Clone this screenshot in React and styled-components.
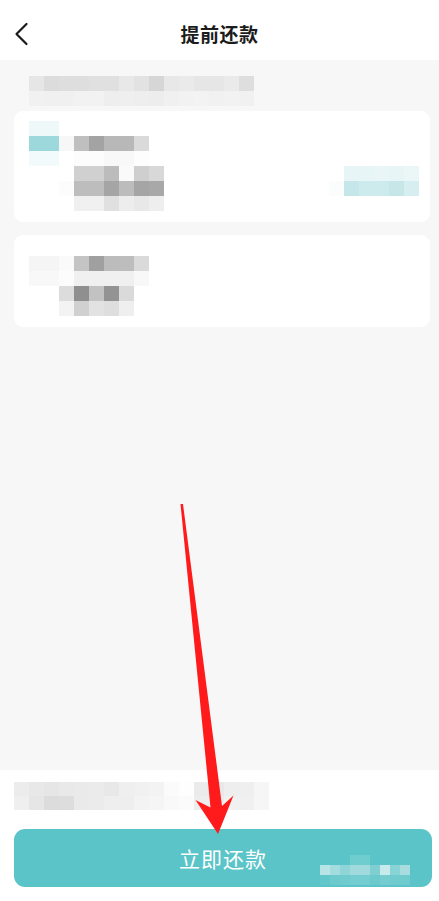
import React from "react";
import styled, { createGlobalStyle } from "styled-components";

const GlobalStyle = createGlobalStyle`
  html, body {
    margin: 0;
    padding: 0;
    background: #ffffff;
  }
  body {
    font-family: "Noto Sans CJK SC", "Noto Sans", sans-serif;
  }
  * {
    box-sizing: border-box;
  }
`;

const W = "#ffffff";
const T = "#5bc4c8";

// blurred blocks, one colour per cell
const topStrip = [
  ["#e6e6e6", "#dcdcdc", "#dedede", "#dedede", "#e0e0e0", "#e0e0e0", "#e8e8e8", "#e2e2e2", "#d6d6d6", "#e8e8e8", "#eaeaea", "#e6e6e6", "#e6e6e6", "#eaeaea", "#dedede"],
  ["#f1f1f1", "#f0f0f0", "#f0f0f0", "#f2f2f2", "#f2f2f2", "#eeeeee", "#efefef", "#eeeeee", "#ededed", "#f0f0f0", "#f2f2f2", "#f3f3f3", "#f1f1f1", "#f2f2f2", "#f1f1f1"],
];

const cardOneLeft = [
  ["#eef8f9", "#eef8f9", W, W, W, W, W, W, W],
  ["#9dd8dd", "#9dd8dd", "#f7f7f7", "#bfbfbf", "#a3a3a3", "#b8b8b8", "#b8b8b8", "#dadada", W],
  ["#f2fafb", "#f2fafb", W, "#fcfcfc", "#fcfcfc", "#f8f8f8", "#f8f8f8", "#fdfdfd", W],
  [W, W, W, "#d0d0d0", "#d0d0d0", "#bcbcbc", "#fafafa", "#cfcfcf", "#d8d8d8"],
  [W, W, "#fcfcfc", "#bdbdbd", "#bdbdbd", "#a5a5a5", "#bcbcbc", "#a5a5a5", "#a8a8a8"],
  [W, W, W, "#f0f0f0", "#f0f0f0", "#e0e0e0", "#ededed", "#e8e8e8", "#eeeeee"],
];

const cardOneRight = [
  [W, "#e8f5f6", "#e8f5f6", "#e9f5f6", "#e8f5f6", "#ebf6f7"],
  ["#fbfdfd", "#c6e7e9", "#cdeaec", "#cdeaec", "#c6e6e8", "#d6eef0"],
];

const cardTwo = [
  ["#f5f5f5", "#f5f5f5", "#fafafa", "#c4c4c4", "#a0a0a0", "#bcbcbc", "#bdbdbd", "#dadada"],
  ["#f8f8f8", "#f8f8f8", "#fcfcfc", "#f0f0f0", "#f0f0f0", "#f0f0f0", "#f0f0f0", "#f8f8f8"],
  [W, W, "#dcdcdc", "#8f8f8f", "#c2c2c2", "#939393", "#dadada", W],
  [W, W, "#f3f3f3", "#d0d0d0", "#e2e2e2", "#dedede", "#efefef", W],
];

const bottomStrip = [
  ["#ececec", "#e8e8e8", "#e6e6e6", "#e9e9e9", "#eaeaea", "#ebebeb", "#e8e8e8", "#efefef", "#f1f1f1", "#f3f3f3", "#fbfbfb", "#fefefe", "#ebebeb", "#e8e8e8", "#eeeeee", "#efefef", "#f6f6f6"],
  ["#efefef", "#e6e6e6", "#dcdcdc", "#dddddd", "#eaeaea", "#ebebeb", "#eeeeee", "#eeeeee", "#f3f3f3", "#f5f5f5", "#f9f9f9", "#fbfbfb", "#ededed", "#ebebeb", "#f1f1f1", "#f0f0f0", "#f6f6f6"],
];

const buttonBlur = [
  [T, T, T, "#6fcdd0", "#6fcdd0", T, T, T, T],
  ["#b8e4e6", "#a2dcdf", "#8fd4d7", "#a0dadd", "#a0dadd", "#7fcfd2", "#c8eaeb", "#88d3d6", "#a9dcdf"],
  ["#62c7ca", "#6ccacd", "#70cbce", "#74cdd0", "#74cdd0", "#6ccacd", "#76cdd0", "#6fcbce", "#70cbce"],
];

function Mosaic({ rows, w = 15, h = 15, className }) {
  return (
    <Grid className={className} $cols={rows[0].length} $w={w} $h={h}>
      {rows.flat().map((c, i) => (
        <Cell key={i} $c={c} />
      ))}
    </Grid>
  );
}

export default function App() {
  return (
    <>
      <GlobalStyle />
      <Page>
        <Header>
          <BackButton aria-label="back">
            <svg width="15" height="24" viewBox="0 0 15 24">
              <path
                d="M12.5 2 L2.5 12 L12.5 22"
                fill="none"
                stroke="#1a1a1a"
                strokeWidth="2.2"
                strokeLinecap="round"
                strokeLinejoin="round"
              />
            </svg>
          </BackButton>
          <Title>提前还款</Title>
        </Header>

        <Body>
          <Mosaic rows={topStrip} />
          <Card $pt={10} $pb={11}>
            <Mosaic rows={cardOneLeft} />
            <RightBlur rows={cardOneRight} />
          </Card>
          <Card $pt={21} $pb={11} $gap={8}>
            <Mosaic rows={cardTwo} />
          </Card>
        </Body>

        <Footer>
          <Mosaic rows={bottomStrip} h={14} />
          <PayButton>
            立即还款
            <ButtonBlur rows={buttonBlur} w={10} h={10} />
          </PayButton>
        </Footer>

        <ArrowLayer width="439" height="901" viewBox="0 0 439 901">
          <path
            d="M180.5 504 L183 504 L222 806 L233.5 795.5 L218 834 L195.5 800 L210.5 807.5 Z"
            fill="#ff1b1b"
          />
        </ArrowLayer>
      </Page>
    </>
  );
}

const Page = styled.div`
  position: relative;
  width: 439px;
  height: 901px;
  display: flex;
  flex-direction: column;
  overflow: hidden;
  background: #f7f7f7;
`;

const Header = styled.header`
  height: 60px;
  flex-shrink: 0;
  background: #ffffff;
  display: flex;
  align-items: center;
  justify-content: center;
  position: relative;
`;

const BackButton = styled.button`
  position: absolute;
  left: 14px;
  top: 22px;
  padding: 0;
  border: 0;
  background: none;
  display: flex;
  cursor: pointer;
`;

const Title = styled.h1`
  margin: 7px 0 0;
  font-size: 19px;
  font-weight: 600;
  color: #1c1c1c;
  letter-spacing: 0.5px;
`;

const Body = styled.main`
  flex: 1;
  display: flex;
  flex-direction: column;
  gap: 5px;
  padding: 16px 9px 0 29px;
`;

const Card = styled.section`
  margin-left: -15px;
  margin-top: ${(p) => p.$gap || 0}px;
  background: #ffffff;
  border-radius: 9px;
  padding: ${(p) => p.$pt}px 11px ${(p) => p.$pb}px 15px;
  display: flex;
  justify-content: space-between;
  align-items: flex-start;
`;

const RightBlur = styled(Mosaic)`
  margin-top: 45px;
`;

const Footer = styled.footer`
  flex-shrink: 0;
  height: 131px;
  background: #ffffff;
  padding: 12px 7px 0 14px;
  display: flex;
  flex-direction: column;
  gap: 19px;
`;

const PayButton = styled.button`
  position: relative;
  height: 58px;
  width: 100%;
  border: 0;
  border-radius: 11px;
  background: ${T};
  color: #ffffff;
  font-family: "Noto Sans CJK SC", "Noto Sans", sans-serif;
  font-size: 21px;
  font-weight: 400;
  letter-spacing: 1px;
  display: flex;
  align-items: center;
  justify-content: center;
  cursor: pointer;
`;

const ButtonBlur = styled(Mosaic)`
  position: absolute;
  left: 306px;
  top: 26px;
`;

const Grid = styled.div`
  display: grid;
  grid-template-columns: repeat(${(p) => p.$cols}, ${(p) => p.$w}px);
  grid-auto-rows: ${(p) => p.$h}px;
  flex-shrink: 0;
`;

const Cell = styled.span`
  background: ${(p) => p.$c};
`;

const ArrowLayer = styled.svg`
  position: absolute;
  left: 0;
  top: 0;
  pointer-events: none;
`;
